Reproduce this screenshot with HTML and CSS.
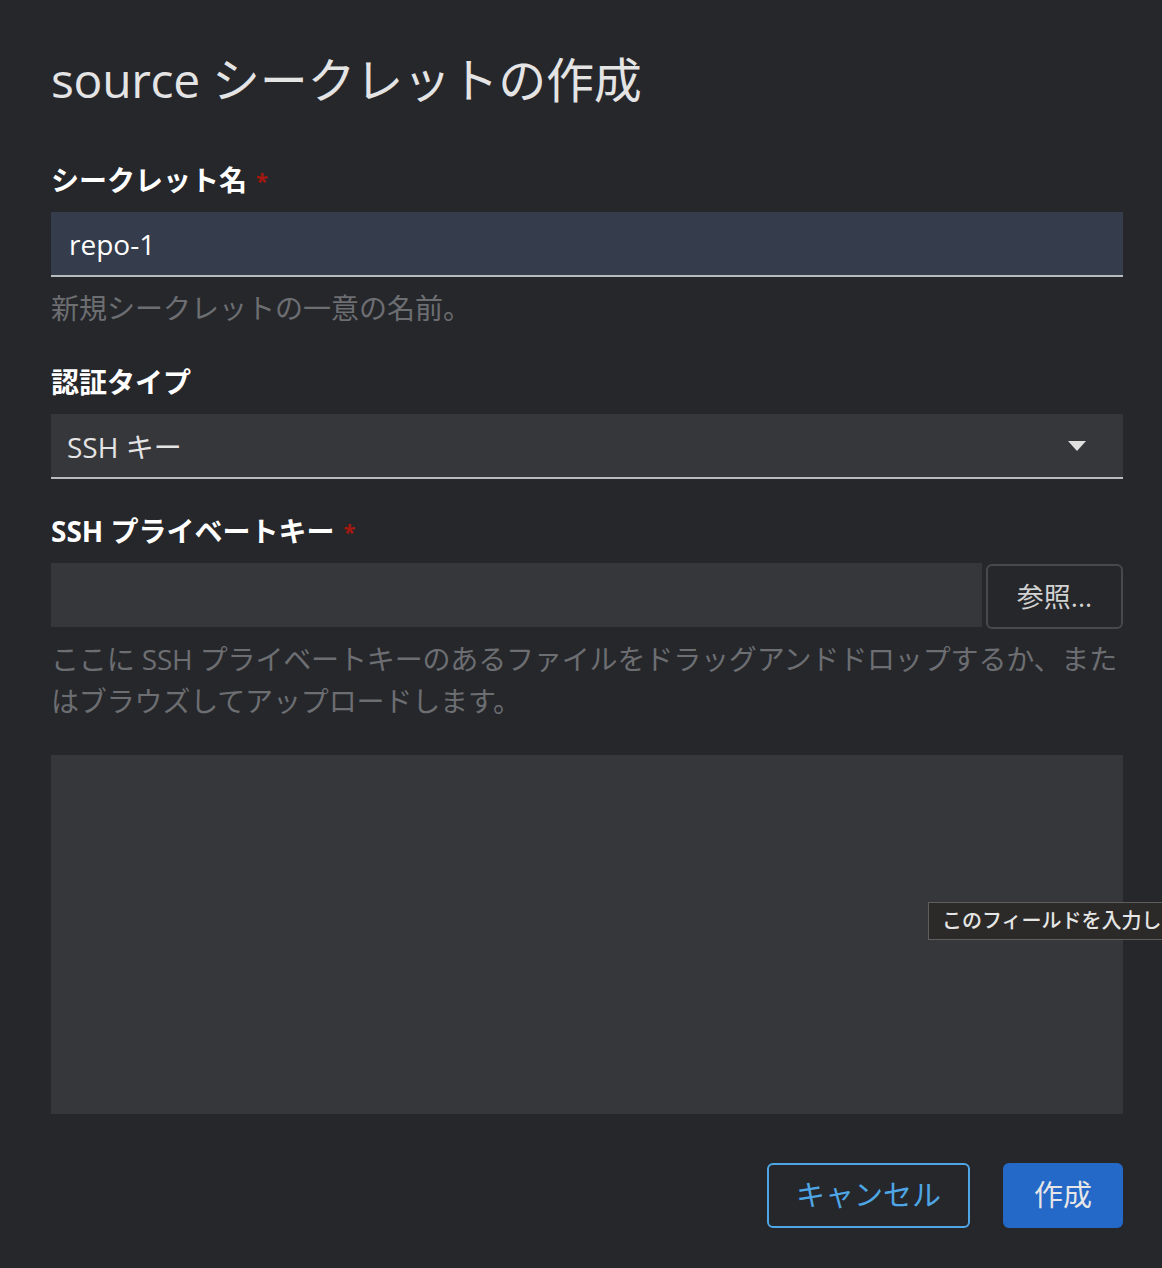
FILE: index.html
```html
<!DOCTYPE html>
<html lang="ja">
<head>
  <meta charset="UTF-8" />
  <meta name="viewport" content="width=device-width, initial-scale=1.0"/>
  <title>source シークレットの作成</title>
  <link rel="stylesheet" href="styles.css">
</head>
<body>

  <div class="modal">
    <h1 class="title">source シークレットの作成</h1>

    <form class="form">
      <div class="group">
        <label class="label">シークレット名<span class="req">*</span></label>
        <div class="input autofill">repo-1</div>
        <p class="helper">新規シークレットの一意の名前。</p>
      </div>

      <div class="group">
        <label class="label">認証タイプ</label>
        <div class="input select">
          <span>SSH キー</span>
          <svg class="caret" width="18" height="10" viewBox="0 0 18 10"><path d="M0 0 L18 0 L9 10 Z" fill="#e0e0e0"/></svg>
        </div>
      </div>

      <div class="group">
        <label class="label">SSH プライベートキー<span class="req">*</span></label>
        <div class="file-row">
          <div class="file-name"></div>
          <button type="button" class="browse">参照...</button>
        </div>
        <p class="helper helper-long">ここに SSH プライベートキーのあるファイルをドラッグアンドドロップするか、またはブラウズしてアップロードします。</p>
        <div class="textarea"></div>
      </div>

      <div class="actions">
        <button type="button" class="btn btn-cancel">キャンセル</button>
        <button type="button" class="btn btn-primary">作成</button>
      </div>
    </form>
  </div>

  <!-- native validation bubble, clipped by the window edge -->
  <div class="tooltip">このフィールドを入力し</div>

</body>
</html>
```

FILE: styles.css
```css
/* General styling */
body {
  font-family: 'Open Sans', 'Noto Sans CJK JP', sans-serif;
  margin: 0;
  padding: 0;
  background: #26272b;
  overflow: hidden;
  width: 1162px;
  height: 1268px;
  position: relative;
}

.modal {
  padding: 50px 39px 0 51px;
}

.title {
  margin: 0;
  font-size: 48px;
  line-height: 60px;
  font-weight: 400;
  color: #e4e4e4;
  letter-spacing: -0.3px;
}

.form {
  margin-top: 52px;
}

.group {
  display: flex;
  flex-direction: column;
}

.label {
  font-size: 28px;
  line-height: 36px;
  font-weight: 700;
  color: #ffffff;
  margin-bottom: 14px;
}

.req {
  color: #a3180f;
  margin-left: 9px;
  font-size: 22px;
  vertical-align: top;
}

.input {
  height: 63px;
  background: #36373b;
  border-bottom: 2px solid #b8bbbe;
  color: #e4e4e4;
  font-size: 28px;
  display: flex;
  align-items: center;
  padding: 0 16px;
}

.autofill {
  background: #353c4c;
  color: #ffffff;
  padding-left: 18px;
}

.select {
  justify-content: space-between;
  padding-right: 37px;
}

.helper {
  margin: 13px 0 0;
  font-size: 28px;
  line-height: 36px;
  color: #6c6e72;
}

.group + .group {
  margin-top: 38px;
}

.group:nth-child(3) {
  margin-top: 34px;
}

.file-row {
  display: flex;
  gap: 4px;
  height: 65px;
}

.file-name {
  flex: 1;
  height: 64px;
  background: #36373b;
}

.browse {
  width: 137px;
  height: 65px;
  margin-top: 1px;
  padding-bottom: 4px;
  background: #26272b;
  border: 2px solid #47494d;
  border-radius: 6px;
  color: #d2d2d2;
  font-family: inherit;
  font-size: 27px;
}

.helper-long {
  margin-top: 10px;
  line-height: 42px;
  letter-spacing: -0.15px;
}

.textarea {
  margin-top: 33px;
  height: 359px;
  background: #36373b;
}

.actions {
  display: flex;
  justify-content: flex-end;
  gap: 33px;
  margin-top: 49px;
}

.btn {
  height: 65px;
  border-radius: 6px;
  font-family: inherit;
  font-size: 29px;
  padding-bottom: 6px;
  cursor: pointer;
}

.btn-cancel {
  width: 203px;
  background: transparent;
  border: 2px solid #4ea6e6;
  color: #4ea6e6;
}

.btn-primary {
  width: 120px;
  background: #2468c8;
  border: none;
  color: #e6e6e6;
}

.tooltip {
  position: absolute;
  left: 928px;
  right: 0;
  top: 902px;
  height: 36px;
  padding-left: 13px;
  background: #2b2a28;
  border: 1px solid #5e5e5e;
  border-right: none;
  color: #e6e6e6;
  font-size: 20px;
  font-weight: 500;
  line-height: 36px;
  white-space: nowrap;
  overflow: hidden;
}
```
